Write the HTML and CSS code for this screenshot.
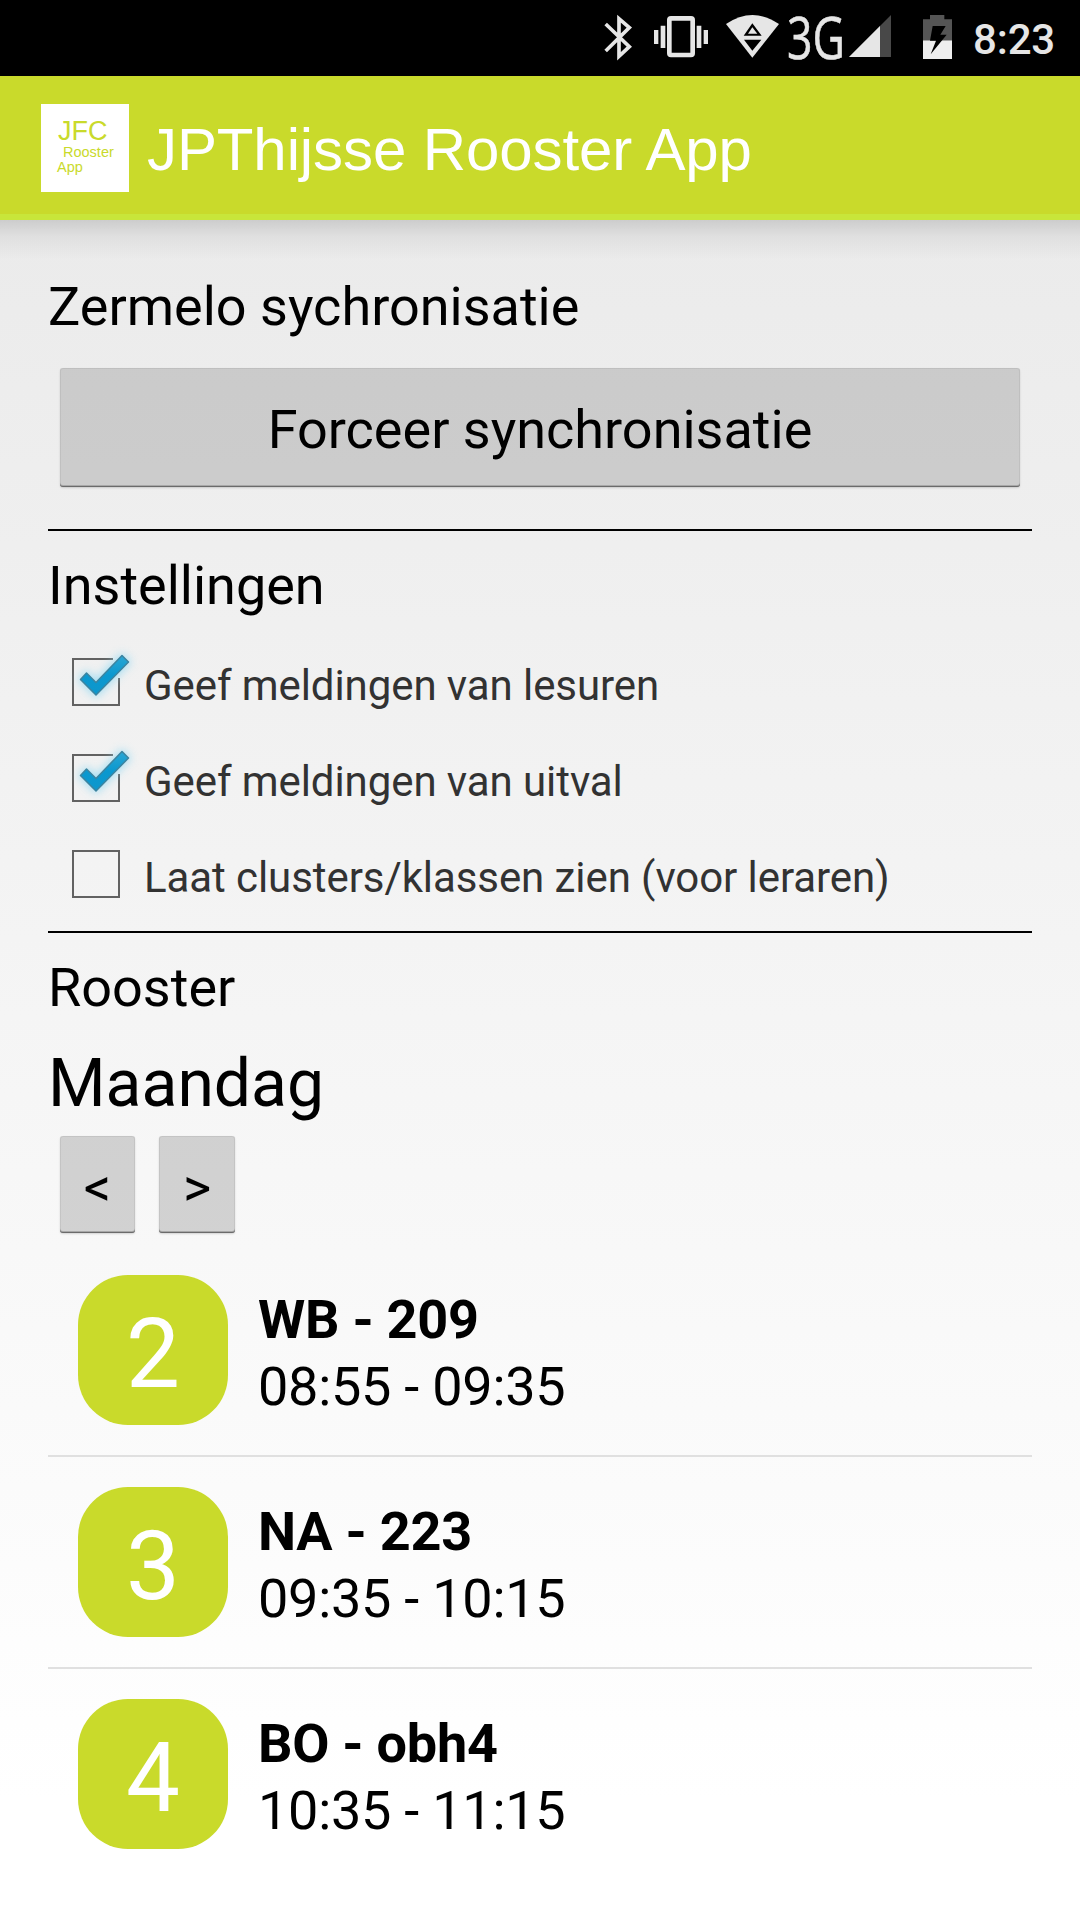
FILE: index.html
```html
<!DOCTYPE html>
<html lang="nl">
<head>
    <meta charset="UTF-8">
    <meta name="viewport" content="width=device-width, initial-scale=1.0">
    <title>JPThijsse Rooster App</title>
    <link rel="stylesheet" href="styles.css">
</head>
<body>
    <div class="statusbar">
        <svg class="bluetooth" viewBox="42 45 84 135" width="28" height="45">
            <path d="M47 72 L118 140 L87 169 V56 L118 83 L47 153" fill="none" stroke="#e6e6e6" stroke-width="11"/>
        </svg>
        <svg class="vibrate" viewBox="192 45 162 129" width="54" height="43">
            <rect x="238" y="55" width="70" height="110" rx="5" fill="none" stroke="#e6e6e6" stroke-width="14"/>
            <path d="M192 90h13v42h-13z M212 77h14v67h-14z M320 77h14v67h-14z M341 90h13v42h-13z" fill="#e6e6e6"/>
        </svg>
        <svg class="wifi" viewBox="408 42 159 132" width="53" height="44">
            <path d="M408 72 Q488 18 567 72 L487 173 Z" fill="#e6e6e6"/>
            <path d="M487 70 L461 107 H515 Z M462 119 H514 L487 152 Z" fill="#000"/>
            <path d="M487 82 L474 101 H502 Z" fill="#e6e6e6"/>
        </svg>
        <svg class="network" viewBox="0 0 58 46" width="58" height="46">
            <text x="-1" y="44" textLength="58" lengthAdjust="spacingAndGlyphs">3G</text>
        </svg>
        <svg class="signal" viewBox="60 45 126 126" width="42" height="42">
            <path d="M60 171 L186 45 V171 Z" fill="#484848"/>
            <path d="M60 171 L153 78 V171 Z" fill="#e6e6e6"/>
        </svg>
        <svg class="battery" viewBox="279 45 87 132" width="29" height="44">
            <path d="M279 58 H300 V45 H343 V58 H366 V121 H279 Z" fill="#555"/>
            <path d="M279 121 H366 V177 H279 Z" fill="#eee"/>
            <path d="M308 78 H347 L331 104 H350 L302 163 L318 122 H300 Z" fill="#000"/>
        </svg>
        <span class="time">8:23</span>
    </div>

    <div class="header">
        <div class="logo">
            <span class="logo-jfc">JFC</span>
            <span class="logo-rooster">Rooster</span>
            <span class="logo-app">App</span>
        </div>
        <h1>JPThijsse Rooster App</h1>
    </div>

    <div class="content">
        <h2>Zermelo sychronisatie</h2>
        <button class="button sync">Forceer synchronisatie</button>
        <hr>

        <h2>Instellingen</h2>
        <div class="options">
            <div class="option">
                <svg class="checkbox" viewBox="0 0 64 60" width="64" height="60">
                    <defs>
                        <linearGradient id="tick" x1="0" y1="0" x2="0" y2="1">
                            <stop offset="0" stop-color="#2ba6d3"/>
                            <stop offset="0.5" stop-color="#0b98cf"/>
                            <stop offset="1" stop-color="#0d97cc"/>
                        </linearGradient>
                    </defs>
                    <path d="M41 13 H1 V59 H47 V32" fill="none" stroke="#626262" stroke-width="2"/>
                    <path class="glow" d="M8.5 33.5 L14.5 27 L24 36.5 L50 9.5 L56.500 16 L24 49 Z"/>
                    <path class="check" d="M8.5 33.5 L14.5 27 L24 36.5 L50 9.5 L56.500 16 L24 49 Z"/>
                </svg>
                <span>Geef meldingen van lesuren</span>
            </div>
            <div class="option">
                <svg class="checkbox" viewBox="0 0 64 60" width="64" height="60">
                    <path d="M41 13 H1 V59 H47 V32" fill="none" stroke="#626262" stroke-width="2"/>
                    <path class="glow" d="M8.5 33.5 L14.5 27 L24 36.5 L50 9.5 L56.500 16 L24 49 Z"/>
                    <path class="check" d="M8.5 33.5 L14.5 27 L24 36.5 L50 9.5 L56.500 16 L24 49 Z"/>
                </svg>
                <span>Geef meldingen van uitval</span>
            </div>
            <div class="option">
                <svg class="checkbox" viewBox="0 0 64 60" width="64" height="60">
                    <path d="M1 13 H47 V59 H1 Z" fill="none" stroke="#626262" stroke-width="2"/>
                </svg>
                <span>Laat clusters/klassen zien (voor leraren)</span>
            </div>
        </div>
        <hr>

        <h2>Rooster</h2>
        <h3>Maandag</h3>
        <div class="days">
            <button class="button day">&lt;</button>
            <button class="button day">&gt;</button>
        </div>

        <div class="lessons">
            <div class="lesson">
                <div class="hour">2</div>
                <div class="info">
                    <b>WB - 209</b>
                    <span>08:55 - 09:35</span>
                </div>
            </div>
            <div class="lesson">
                <div class="hour">3</div>
                <div class="info">
                    <b>NA - 223</b>
                    <span>09:35 - 10:15</span>
                </div>
            </div>
            <div class="lesson">
                <div class="hour">4</div>
                <div class="info">
                    <b>BO - obh4</b>
                    <span>10:35 - 11:15</span>
                </div>
            </div>
        </div>
    </div>
</body>
</html>
```
FILE: styles.css
```css
* {
    box-sizing: border-box;
}

body {
    margin: 0;
    height: 1920px;
    overflow: hidden;
    font-family: Roboto, sans-serif;
    color: black;
    background: linear-gradient(#e9e9e9 76px, #ffffff 1800px);
}

.statusbar {
    display: flex;
    align-items: flex-start;
    justify-content: flex-end;
    height: 76px;
    padding: 15px 25px 0 0;
    background-color: black;
    color: #e6e6e6;
}

.bluetooth {
    overflow: visible;
}

.vibrate {
    margin-left: 22px;
}

.wifi {
    margin-left: 18px;
    margin-top: -1px;
}

.network {
    margin-left: 9px;
    overflow: visible;
    fill: #e6e6e6;
    stroke: #e6e6e6;
    stroke-width: 0.6;
    font-family: "Open Sans", sans-serif;
    font-size: 58px;
}

.signal {
    margin-left: 3px;
}

.battery {
    margin-left: 32px;
}

.time {
    margin-left: 21px;
    font-size: 42px;
    font-weight: 500;
    line-height: 49px;
    letter-spacing: -0.2px;
}

.header {
    display: flex;
    align-items: center;
    height: 144px;
    padding: 0 41px 0;
    background-color: #c9da2b;
    border-bottom: 6px solid #c8e63a;
}

.logo {
    display: flex;
    flex-direction: column;
    width: 88px;
    height: 88px;
    margin-top: 6px;
    padding: 14px 0 0 16px;
    background-color: white;
    color: #c9da2b;
    font-family: "Liberation Sans", sans-serif;
    font-size: 14.5px;
    line-height: 15px;
}

.logo-jfc {
    padding-left: 1px;
    font-size: 27px;
    line-height: 27px;
}

.logo-rooster {
    padding-left: 6px;
}

h1 {
    margin: 10px 0 0 18px;
    color: white;
    font-family: "Liberation Sans", sans-serif;
    font-size: 60px;
    font-weight: normal;
    line-height: 70px;
    letter-spacing: -0.1px;
}

.content {
    padding: 55px 48px 0;
    background: linear-gradient(rgba(0, 0, 0, 0.13), rgba(0, 0, 0, 0.05) 16px, transparent 40px);
}

h2 {
    margin: 0;
    font-size: 54px;
    font-weight: normal;
    line-height: 63px;
}

h3 {
    margin: 26px 0 14px;
    font-size: 66px;
    font-weight: normal;
    line-height: 77px;
}

hr {
    height: 2px;
    margin: 0 0 23px;
    border: none;
    background-color: black;
}

.button {
    display: block;
    padding: 0;
    border: none;
    border-radius: 3px;
    background-color: rgba(153, 153, 153, 0.4);
    box-shadow: inset 0 -1px 0 #6b6b6b, inset 0 -2px 0 #a8a8a8, inset 0 0 0 1px rgba(0, 0, 0, 0.06), 0 1px 2px rgba(0, 0, 0, 0.15);
    color: black;
    font-family: Roboto, sans-serif;
    font-size: 54px;
}

.sync {
    width: 960px;
    height: 119px;
    margin: 30px 12px 42px;
    padding-top: 4px;
}

.options {
    margin: 17px 0 9px;
}

.option {
    display: flex;
    align-items: center;
    height: 96px;
    padding-left: 24px;
    color: #323232;
    font-size: 42px;
    line-height: 49px;
    letter-spacing: -0.08px;
}

.option span {
    margin-left: 8px;
    padding-top: 7px;
}

.checkbox {
    margin-top: -12px;
    overflow: visible;
}

.glow {
    fill: #8fd8f2;
    stroke: #8fd8f2;
    stroke-width: 4;
    opacity: 0.8;
    filter: blur(5px);
}

.check {
    fill: url(#tick);
    stroke: #3c84a0;
    stroke-width: 1.5;
    stroke-linejoin: round;
}

.days {
    display: flex;
    gap: 24px;
    padding-left: 12px;
}

.day {
    width: 75px;
    height: 97px;
    padding-top: 6px;
    font-size: 54px;
}

.day:last-child {
    width: 76px;
}

.lessons {
    margin-top: 12px;
}

.lesson {
    display: flex;
    align-items: center;
    height: 212px;
    padding: 0 30px;
    border-bottom: 2px solid #e0e0e0;
}

.lesson:last-child {
    border-bottom-color: transparent;
}

.hour {
    width: 150px;
    height: 150px;
    border-radius: 50px;
    background-color: #c9da2b;
    color: white;
    font-size: 96px;
    line-height: 158px;
    text-align: center;
}

.info {
    display: flex;
    flex-direction: column;
    gap: 4px;
    margin-left: 30px;
    padding-top: 6px;
    font-size: 54px;
    line-height: 63px;
    letter-spacing: -0.25px;
}
```
